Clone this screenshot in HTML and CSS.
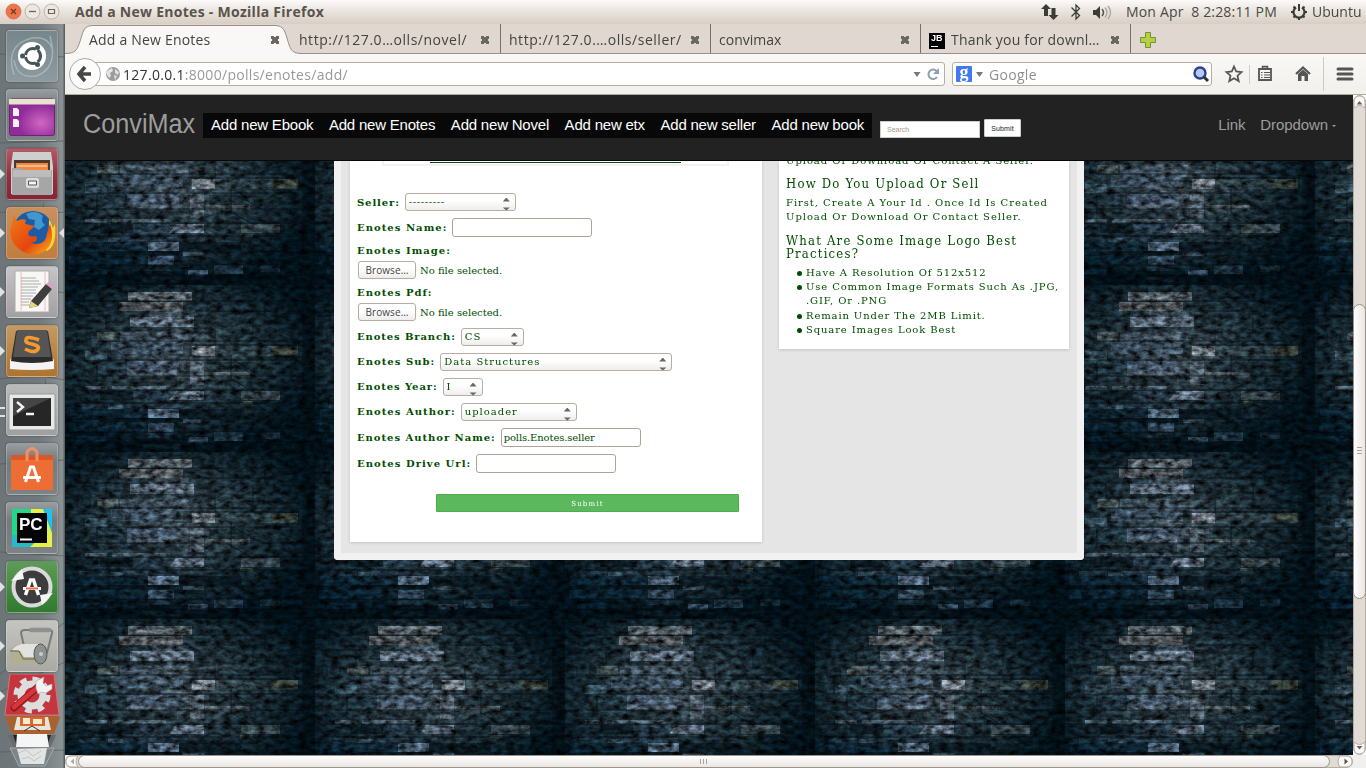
FILE: index.html
```html
<!DOCTYPE html>
<html lang="en">
<head>
<meta charset="utf-8">
<title>Add a New Enotes</title>
<link rel="stylesheet" href="styles.css">
</head>
<body>
<div class="desktop">
  <header class="topbar">
    <svg class="winbtns" width="66" height="24" viewBox="0 0 66 24">
      <circle cx="13.500" cy="11.500" r="7.500" fill="#ee7549" stroke="#d9774f"/><path d="M11 9l5 5M16 9l-5 5" stroke="#6b3a28" stroke-width="1.300"/>
      <circle cx="32.500" cy="11.500" r="7.500" fill="#ece7e1" stroke="#bcb3a8"/><path d="M29 11.500h7" stroke="#6d655b" stroke-width="1.300"/>
      <circle cx="51.500" cy="11.500" r="7.500" fill="#ece7e1" stroke="#bcb3a8"/><path d="M48.500 9.500h6v4h-6z" fill="none" stroke="#6d655b" stroke-width="1.200"/>
    </svg>
    <span class="wintitle">Add a New Enotes - Mozilla Firefox</span>
    <div class="tray">
      <svg width="74" height="24" viewBox="0 0 74 24" fill="#3c3b37">
        <path d="M6 4L1 9h3v7h4V9h3zM13.500 20l5-5h-3V8h-4v7h-3z"/>
        <path d="M31.500 7.500l8 8L36 19V5l3.500 3.500-8 8" fill="none" stroke="#3c3b37" stroke-width="1.300"/>
        <path d="M53 10h3l4-4v13l-4-4h-3z"/>
        <path d="M62 9q3 3.500 0 7" fill="none" stroke="#55534f" stroke-width="1.500"/><path d="M65 7.500q4 5 0 10M68 6q5 6.500 0 13" fill="none" stroke="#aaa59e" stroke-width="1.400"/>
      </svg>
      <span class="clock">Mon Apr&nbsp; 8 2:28:11 PM</span>
      <svg width="18" height="18" viewBox="0 0 18 18" fill="none" stroke="#3c3b37"><path d="M6 4.500a5.500 5.500 0 1 0 6 0" stroke-width="2.200"/><path d="M9 1v7" stroke-width="2"/><path d="M1 9h3M14 9h3M9 14v3M3.500 3.500l2 2M14.500 3.500l-2 2M3.500 14.500l2-2M14.500 14.500l-2-2" stroke-width="2"/></svg>
      <span class="user">Ubuntu</span>
    </div>
  </header>

  <aside class="launcher">
    <svg class="stone" width="65" height="744" viewBox="0 0 65 744" fill="none" stroke="#4c5557"><path d="M0 30l65 3M0 119l65-2M0 188l30 3 35-3M44 179l-2 8 3 6M0 268l40-3 25 4M0 355l34-4 31 5M45 355l4 33M0 440l65-4M0 528l65 4M0 650l65-52M0 668l65-30M0 728l65-2"/></svg>
    <div class="tile t-dash"><svg viewBox="0 0 52 52"><path d="M8 45Q-2 15 26 8q18-2 21 14M44 6q9 32-14 40-19 3-22-16" stroke="#bac7ca" fill="none" stroke-width="1.500" opacity=".6"/><circle cx="26" cy="26" r="14" fill="#fff"/><circle cx="27" cy="26" r="7.500" fill="none" stroke="#465456" stroke-width="3" stroke-dasharray="13.700 2" stroke-dashoffset="7"/><g fill="#465456"><circle cx="16.500" cy="26" r="2.500"/><circle cx="31.500" cy="17.500" r="2.500"/><circle cx="31.500" cy="34.500" r="2.500"/></g></svg></div>
    <div class="tile t-glass"><svg viewBox="0 0 52 52"><defs><radialGradient id="pu" cx=".7" cy=".65"><stop stop-color="#d267c2"/><stop offset="1" stop-color="#8f2c99"/></radialGradient></defs><rect x="3.500" y="10" width="45" height="36.500" rx="2" fill="url(#pu)" stroke="#6e2277"/><rect x="3" y="10" width="46" height="5.500" fill="#e7e3cd"/><path d="M7 19h4l2 2v6H7zM7 30h4l2 2v6H7z" fill="#f6f0f6"/></svg></div>
    <div class="tile t-red run"><svg viewBox="0 0 52 52"><path d="M7 4h38l2 14v28H5V18z" fill="#cfcfcf"/><path d="M8 12h36v13H8z" fill="#4d3930"/><path d="M10 15h32v10H10z" fill="#f0893f"/><path d="M11 18h30" stroke="#fff0c8"/><path d="M6 20h9l3 2h28v25H6z" fill="#a6a6a6"/><path d="M7 22h38v7H7z" fill="#bcbcbc"/><rect x="20" y="30" width="13" height="10" rx="2" fill="#ddd"/><path d="M22.500 33h8v4h-8z" fill="#f6f6f6" stroke="#555"/></svg></div>
    <div class="tile t-orange run focus"><svg viewBox="0 0 52 52"><defs><linearGradient id="fx" x2="1" y2="1"><stop stop-color="#f17b17"/><stop offset=".6" stop-color="#e6450e"/><stop offset="1" stop-color="#f5b91d"/></linearGradient></defs><circle cx="27" cy="24" r="20" fill="#1d5ca4"/><path d="M20 7q10-5 17 2-3 5 2 9l-6 5-5-3 1-7-6-1z" fill="#4298ce"/><path d="M43 12q3 4 4 9l2-4q2 22-8 27l-6-4q9-10 8-28z" fill="#f9d437"/><path d="M8 8l3 6q5-3 9-1l-1 4 10 2-6 5q-3 7 7 5 3 5-5 7 15 4 16-10l3-9q6 18-5 27-13 8-26-2Q2 33 5 20z" fill="url(#fx)"/></svg></div>
    <div class="tile t-grey run"><svg viewBox="0 0 52 52"><path d="M9 5h34v41H9z" fill="#f7f7f5" stroke="#aaa"/><path d="M15 6v39M39 6v39" stroke="#e8a5a0" stroke-width=".7"/><path d="M15 12h15M15 15h18M15 18h20M15 21h17M15 24h15M15 27h15M15 30h12M15 33h10M15 36h8M15 39h18" stroke="#999" stroke-width=".8"/><path d="M25 35L40 18l6 5-14 17-9 2z" fill="#3e3e3e"/><path d="M25 35l7 5-9 2z" fill="#e7d67c"/><path d="M40 18q3-4 7 1 0 2-1 4z" fill="#d9a0ca"/></svg></div>
    <div class="tile t-brown run"><svg viewBox="0 0 52 52"><path d="M7 31l-3 4v9q22 2 44 0v-9l-3-4z" fill="#f4f4f4"/><path d="M10 6h32l5 30q-21 4-42 0z" fill="#2b2b2b"/><path d="M11 5h30l4 27H7z" fill="#555"/><path d="M33 15q-13-5-13 0-1 3 6 4 8 2 6 5-3 5-13 0" fill="none" stroke="#f7982f" stroke-width="3.600"/></svg></div>
    <div class="tile t-grey2 run2"><svg viewBox="0 0 52 52"><rect x="3" y="10" width="46" height="36" rx="1" fill="#e8e8e8" stroke="#999"/><path d="M7 14h38v28H7z" fill="#262626"/><path d="M7 14h38L7 32z" fill="#454545"/><path d="M11 18l6 5-6 5M20 30h8" fill="none" stroke="#f4f4f4" stroke-width="2.400"/></svg></div>
    <div class="tile t-glass"><svg viewBox="0 0 52 52"><path d="M5 12h42v35H5z" fill="#ee6d35"/><path d="M5 12h42v5H5z" fill="#d65a28"/><path d="M21 18v-9q5-7 10 0v9" fill="none" stroke="#f38e65" stroke-width="3"/><path d="M19.500 39l5-15h3l5 15M17 34.500h18" fill="none" stroke="#fff" stroke-width="3"/></svg></div>
    <div class="tile t-glass"><svg viewBox="0 0 52 52"><path d="M6 7h40v38H6z" fill="#21d789"/><path d="M29 7h17v30z" fill="#1cb8f0"/><path d="M25 7h12l9 24v14H24z" fill="#e5f146"/><path d="M39 7h7v20z" fill="#1cc4ef"/><path d="M6 45l18 0 10-9-28-3z" fill="#27b9c9"/><path d="M11 11h30v30H11z" fill="#050505"/><text class="pc" x="13" y="28">PC</text><path d="M14 37.500h12" stroke="#fff" stroke-width="2"/></svg></div>
    <div class="tile t-green run"><svg viewBox="0 0 52 52"><circle cx="26" cy="26" r="18.500" fill="#3c3c3c" stroke="#dadada" stroke-width="4"/><path d="M5 20l11-12 2 10zM47 32L36 44l-2-10z" fill="#f5f5f5"/><path d="M19.500 34l5-15h3l5 15" fill="none" stroke="#fff" stroke-width="3.500"/><path d="M17 27.500h18" stroke="#fff" stroke-width="3"/><path d="M20 27.500h12" stroke="#ee7433" stroke-width="2"/></svg></div>
    <div class="tile t-paper run"><svg viewBox="0 0 52 52"><path d="M18 26L15 13q0-3 4-3h24q4 0 3 3l-5 20" fill="none" stroke="#777c7b" stroke-width="2"/><path d="M25 10h18" stroke="#8d9291" stroke-width="4.500" stroke-linecap="round"/><path d="M4 29q8-6 14-5h18v20H8q-4 0-4-6z" fill="#b0af94"/><path d="M16 24h19v13H18l-4-6-8-1q4-5 10-6z" fill="#e2e3df"/><ellipse cx="34.500" cy="34" rx="6.500" ry="10" fill="#8c9191" stroke="#555"/><circle cx="35" cy="34" r="2" fill="#ccc"/><path d="M4 31h9l4 8h12" stroke="#66684f" fill="none"/></svg></div>
    <div class="stack">
      <svg width="56" height="94" viewBox="0 0 56 94"><path d="M6 0h44l5 41H1z" fill="#c4363e" stroke="#de7076"/><circle cx="28" cy="21" r="11" fill="none" stroke="#ddd" stroke-width="7"/><circle cx="28" cy="21" r="15.500" fill="none" stroke="#ddd" stroke-width="6" stroke-dasharray="6.500 5.670"/><path d="M10 34l25-22" stroke="#9b1a20" stroke-width="7" stroke-linecap="round"/><path d="M10 33l25-21" stroke="#d8353c" stroke-width="4.500" stroke-linecap="round"/><path d="M32 14l0-7 8-4-1 6 3 3 6-2 0 5-6 4-5-1-3 2z" fill="#f2f2f2" stroke="#aaa" stroke-width=".6"/><path d="M4 42h49l3 1-6 17H8L1 43z" fill="#a9622f"/><path d="M13 43h31l3 13H10z" fill="#e8e4dd"/><path d="M16 43h25v9H16z" fill="#db672d"/><path d="M19 44h7v6h-7zM29 45h9v5h-9z" fill="#f5ead2"/><path d="M20 57l8-5 8 5" fill="none" stroke="#333"/><path d="M4 61h48l-6 13H10z" fill="#666c6e"/><path d="M9 61h38l-4 11H13z" fill="#222"/><path d="M13 60h30l2 13H12z" fill="#f5f5f5"/><path d="M6 74h44l-9 18H15z" fill="#7d8588" stroke="#a5abac"/><path d="M13 75l30-1-3 16H17z" fill="#e2e3e3"/><path d="M14 79l8-3 7 6 8-5M18 85l7-2 5 4 7-5" stroke="#c2c5c5" fill="none"/></svg>
    </div>
  </aside>

  <main class="browser">
    <div class="tabs">
      <svg class="tabshape" width="245" height="31" viewBox="0 0 245 31"><path d="M0 29.500c10 0 12-3 15-12S18 1.500 28 1.500H210c9 0 10 6 13 16s5 12 15 12H245V31H0z" fill="#f9f8f6"/><path d="M0 29.500c10 0 12-3 15-12S18 1.500 28 1.500H210c9 0 10 6 13 16s5 12 15 12H245" fill="none" stroke="#96918a"/></svg>
      <div class="tab"><span class="w1">Add a New Enotes</span><i class="x"></i></div>
      <div class="tab line"><span class="w2">http://127.0…olls/novel/</span><i class="x"></i></div>
      <div class="tab line"><span class="w2">http://127.0.…olls/seller/</span><i class="x"></i></div>
      <div class="tab line"><span>convimax</span><i class="x"></i></div>
      <div class="tab line"><span class="jb">JB</span><span class="w1">Thank you for downl…</span><i class="x"></i></div>
      <svg class="plus" width="18" height="18" viewBox="0 0 18 18"><path d="M6.500 1.500h5v5h5v5h-5v5h-5v-5h-5v-5h5z" fill="#b7cf46" stroke="#739234"/></svg>
    </div>
    <div class="toolbar">
      <svg class="back" width="34" height="34" viewBox="0 0 34 34"><circle cx="17" cy="17" r="15.500" fill="#fcfcfb" stroke="#aaa9a7"/><path d="M17 10l-6 7 6 7M11 17h12" fill="none" stroke="#474747" stroke-width="3.500"/></svg>
      <div class="url">
        <svg width="16" height="16" viewBox="0 0 16 16"><circle cx="8" cy="8" r="7" fill="#9c9c9c"/><path d="M3 4l4-2 1 3-3 2 1 3-2 2-3-5zM10 3l4 3-1 3-3-2zM9 9l3 1-2 4z" fill="#e3e3e3"/></svg>
        <span class="addr"><b>127.0.0.1</b>:8000/polls/enotes/add/</span>
        <svg width="30" height="16" viewBox="0 0 30 16"><path d="M2.500 6h7L6 11z" fill="#777"/><path d="M25.500 5A4.700 4.700 0 1 0 26 11" fill="none" stroke="#8fa0ad" stroke-width="2"/><path d="M28 2v6h-6z" fill="#8fa0ad"/></svg>
      </div>
      <div class="search">
        <span class="g">g</span>
        <svg width="8" height="6" viewBox="0 0 8 6"><path d="M0 1h7L3.500 6z" fill="#777"/></svg>
        <span class="ph">Google</span>
        <svg width="18" height="18" viewBox="0 0 18 18"><circle cx="8" cy="8" r="5.500" fill="#b9c8ee" stroke="#2a418f" stroke-width="2.400"/><path d="M12 12l4 4" stroke="#333" stroke-width="3"/></svg>
      </div>
      <svg class="icons" width="144" height="40" viewBox="0 0 144 40" fill="none" stroke="#555">
        <path d="M18 12.500l2.200 5 5.300.6-4 3.600 1.200 5.400L18 24.300l-4.700 2.800 1.200-5.400-4-3.600 5.300-.6z" stroke-width="1.800"/>
        <path d="M33.500 11v19" stroke="#d0ccc7"/>
        <path d="M43 15h12v11H43z" stroke-width="1.800"/><path d="M46.500 12.500h5v2h-5z" stroke-width="1.500"/><path d="M45 18.500h1.500M48 18.500h6M45 21h1.500M48 21h6M45 23.500h1.500M48 23.500h6" stroke-width="1"/>
        <path d="M80 20l7-6.500 7 6.500" stroke-width="2.200"/><path d="M82 20l5-4.500 5 4.500v7h-3.500v-5h-3v5H82z" fill="#555" stroke="none"/>
        <path d="M107.500 3v34" stroke="#cdc8c2"/>
        <path d="M122 15h14M122 20h14M122 25h14" stroke-width="3" stroke-linecap="round"/>
      </svg>
    </div>

    <div class="viewrow">
      <div class="page">
        <svg class="wall" width="1288" height="660" viewBox="0 0 1288 660">
          <defs>
            <radialGradient id="glowA" cx=".44" cy=".42" r=".58"><stop stop-color="#425059"/><stop offset=".45" stop-color="#22343c"/><stop offset="1" stop-color="#02131c"/></radialGradient>
            <filter id="grain" x="0" y="0" width="1" height="1" color-interpolation-filters="sRGB"><feTurbulence type="fractalNoise" baseFrequency=".12 .2" numOctaves="5" seed="5"/><feColorMatrix values="1.200 0 0 0 -.15  1.200 0 0 0 -.15  1.200 0 0 0 -.15  0 0 0 0 1"/></filter>
            <pattern id="stones" width="250" height="167" patternUnits="userSpaceOnUse" y="23">
              <path fill="url(#glowA)" d="M0 0h250v167H0z"/>
              <g opacity=".56">
              <path fill="#858b8e" d="M63 7h64v9H63z"/><path fill="#74706f" d="M54 17h64v9H54z"/><path fill="#606567" d="M140 87h45v5h-45z"/>
              <path fill="#7c8a9e" d="M65 32h64v10H65z"/><path fill="#8490a8" d="M111 106h28v9h-35z"/><path fill="#4a5a68" d="M84 26h40v6H84zM55 47h68v10H55z"/>
              <path fill="#172329" d="M129 30h22v18h-22zM42 42h60v4H42zM104 61h22v10h-22zM65 92h47v9H65z"/>
              <path fill="#5c6662" d="M32 47h21v9H32z"/><path fill="#42566a" d="M46 57h72v12H46z"/><path fill="#9aa0a8" d="M127 61h23v10h-23z"/>
              <path fill="#34464c" d="M150 61h82v10h-82z"/><path fill="#17282e" d="M144 77h70v10h-70z"/><path fill="#4a565b" d="M176 106h39v9h-39z"/><path fill="#50533f" d="M207 61h26v9h-26zM175 116h13v3h-13z"/>
              <path fill="#416070" d="M20 66h22v9H20zM43 120h15v4H43z"/><path fill="#1d3542" d="M33 76h29v12H33zM14 119h28v5H14z"/>
              <path fill="#4c5f78" d="M62 76h52v11H62z"/><path fill="#64707d" d="M125 76h14v24h-14zM62 87h50v4H62z"/>
              <path fill="#5b6e7b" d="M20 101h22v4H20zM47 101h54v4H47z"/><path fill="#4e6473" d="M118 134h21v4h-21z"/><path fill="#24394c" d="M69 106h34v9H69zM58 119h56v4H58z"/>
              <path fill="#010d15" d="M35 106h33v9H35zM114 124h62v9h-62zM35 133h82v4H35zM70 153h50v5H70z"/>
              <path fill="#0a2638" d="M5 124h38v10H5zM45 124h37v9H45zM4 138h76v9H4zM12 151h30v6H12z"/>
              <path fill="#7189a5" d="M83 124h31v9H83z"/><path fill="#48617c" d="M83 138h26v9H83zM123 152h20v6h-20z"/><path fill="#2c465a" d="M149 147h29v9h-29z"/><path fill="#1b303d" d="M82 148h22v5H82zM195 147h20v7h-20zM78 159h38v5H78z"/>
              </g>
              <path d="M0 16h250M0 31h60M130 26h80M32 56h190M116 60h120M33 75h200M20 91h230M0 105h250M12 118h230M0 134h250M0 147h240M0 157h250M41 32v14M14 8v20M32 76v20M150 48v12M166 70v26M188 32v16M188 118l25 14M165 93l20 12M170 76l28 16M12 48v9M25 48v9M200 18v12" fill="none" stroke="#000b12" stroke-opacity=".7"/>
              <path d="M0 157h250v10H0zM237 0h13v167h-13z" fill="#010c13" opacity=".55"/>
            </pattern>
          </defs>
          <rect width="1288" height="660" fill="url(#stones)"/>
          <rect class="texture" width="1288" height="660" filter="url(#grain)"/>
        </svg>
        <nav class="navbar">
          <span class="brand">ConviMax</span>
          <div class="links"><a>Add new Ebook</a><a>Add new Enotes</a><a>Add new Novel</a><a>Add new etx</a><a>Add new seller</a><a>Add new book</a></div>
          <span class="q">Search</span><span class="go">Submit</span>
          <div class="right"><a>Link</a><a>Dropdown <i class="caret"></i></a></div>
        </nav>
        <section class="panel">
          <div class="card form">
            <div class="prev"><span></span></div>
            <div class="row"><label class="snug">Seller:</label><span class="sel s1">---------<i></i></span></div>
            <div class="row"><label>Enotes Name:</label><input type="text"></div>
            <div class="row r20"><label>Enotes Image:</label></div>
            <div class="row r21"><span class="browse">Browse…</span><span class="nofile">No file selected.</span></div>
            <div class="row r21 mid"><label>Enotes Pdf:</label></div>
            <div class="row r22"><span class="browse">Browse…</span><span class="nofile">No file selected.</span></div>
            <div class="row"><label class="snug">Enotes Branch:</label><span class="sel s2">CS<i></i></span></div>
            <div class="row"><label>Enotes Sub:</label><span class="sel s3">Data Structures<i></i></span></div>
            <div class="row"><label class="snug">Enotes Year:</label><span class="sel s4">I<i></i></span></div>
            <div class="row"><label>Enotes Author:</label><span class="sel s5">uploader<i></i></span></div>
            <div class="row r26"><label class="long">Enotes Author Name:</label><input type="text" value="polls.Enotes.seller"></div>
            <div class="row r26"><label>Enotes Drive Url:</label><input type="text"></div>
            <div class="submit">Submit</div>
          </div>
          <div class="card help">
            <p class="cut">Upload Or Download Or Contact A Seller.</p>
            <h4>How Do You Upload Or Sell</h4>
            <p>First, Create A Your Id . Once Id Is Created<br>Upload Or Download Or Contact Seller.</p>
            <h4>What Are Some Image Logo Best<br>Practices?</h4>
            <ul><li>Have A Resolution Of 512x512</li><li>Use Common Image Formats Such As .JPG,<br>.GIF, Or .PNG</li><li>Remain Under The 2MB Limit.</li><li>Square Images Look Best</li></ul>
          </div>
        </section>
      </div>
      <div class="vbar">
        <svg width="13" height="660" viewBox="0 0 13 660"><defs><linearGradient id="vb"><stop stop-color="#fff"/><stop offset="1" stop-color="#e9e5e1"/></linearGradient></defs><rect x=".5" y=".5" width="12" height="659" rx="6" fill="#e1dbd5" stroke="#b5aca2"/><path d="M1 13V7q0-6 5.500-6T12 7v6q-5.500-5-11 0zM1 647v6q0 6 5.500 6t5.500-6v-6q-5.500 5-11 0z" fill="#faf9f8" stroke="#b5aca2"/><path d="M3.500 9.500L6.500 6l3 3.500zM3.500 651l3 3.500 3-3.500z" fill="#666"/><rect x=".5" y="209.500" width="12" height="294" rx="6" fill="url(#vb)" stroke="#9b938a"/><path d="M4 352.500h5M4 355.500h5M4 358.500h5" stroke="#aaa39a"/></svg>
      </div>
    </div>
    <div class="hbar">
      <svg width="1301" height="13" viewBox="0 0 1301 13"><defs><linearGradient id="hb" x2="0" y2="1"><stop stop-color="#fff"/><stop offset="1" stop-color="#e9e5e1"/></linearGradient></defs><rect x=".5" y=".5" width="1287" height="12" rx="6" fill="#e1dbd5" stroke="#b5aca2"/><path d="M13 1H7Q1 1 1 6.500T7 12h6q-4-5.500 0-11zM1275 1h6q6 0 6 5.500T1281 12h-6q-4-5.500 0-11z" fill="#faf9f8" stroke="#b5aca2"/><path d="M9 3.500L5.500 6.500l3.500 3z" fill="#aaa"/><path d="M1279.500 3.500l3.500 3-3.500 3z" fill="#555"/><rect x="13.500" y=".5" width="1251" height="12" rx="6" fill="url(#hb)" stroke="#9b938a"/><path d="M635.500 4v5M638.500 4v5M641.500 4v5" stroke="#aaa39a"/></svg>
    </div>
  </main>
</div>
</body>
</html>
```
FILE: styles.css
```css
* { box-sizing: border-box; }
body { margin: 0; width: 1366px; height: 768px; overflow: hidden; }
svg { display: block; flex: none; }
.desktop { display: grid; grid-template: 24px 744px / 65px 1301px; font-family: "Open Sans", sans-serif; }

.topbar { grid-column: 1 / 3; display: flex; align-items: center; background: linear-gradient(#fcfbfa, #efebe7 30%, #d8cec4); color: #4b4843; white-space: nowrap; }
.wintitle { margin: -2px 0 0 9px; font-weight: 700; font-size: 14px; color: #5a534b; width: 300px; letter-spacing: .28px; }
.tray { margin-left: auto; display: flex; align-items: center; width: 326px; font-size: 14px; }
.clock { margin: -2px 0 0 12px; width: 164px; letter-spacing: .17px; }
.user { margin: -2px 0 0 4px; }

.launcher { position: relative; padding: 6px 0 0 6px; display: flex; flex-direction: column; gap: 7px; background: linear-gradient(90deg, #6d7578, #71797c 60%, #8b9294 96%, #4f5557); overflow: hidden; }
.stone { position: absolute; left: 0; top: 0; opacity: .6; }
.tile { position: relative; flex: none; width: 52px; height: 52px; border-radius: 4px; border: 1px solid rgba(255,255,255,.22); box-shadow: 0 0 2px rgba(0,0,0,.45); }
.tile svg { width: 52px; height: 52px; margin: -1px; }
.t-dash { background: linear-gradient(#77868b, #8d9ba0); }
.t-glass { background: linear-gradient(#979c9e, #747b7d 35%, #7d8284); }
.t-red { background: linear-gradient(#b05c66, #8f3442 50%, #812634); }
.t-orange { background: linear-gradient(#c9905e, #c27c3e); }
.t-grey { background: linear-gradient(#c6c4c6, #a19fa2); }
.t-grey2 { background: linear-gradient(#b9bbbb, #9ea1a1); }
.t-brown { background: linear-gradient(#c39a63, #ad7430); }
.t-green { background: linear-gradient(#5f9b58, #2f7a30); }
.t-paper { background: linear-gradient(#c4c4c0, #a9aaa3); }
.run::before { content: ""; position: absolute; left: -7px; top: 20px; border: 5px solid transparent; border-left-color: #dfe1e2; border-right: 0; }
.focus::after { content: ""; position: absolute; left: 52px; top: 20px; border: 5px solid transparent; border-right-color: #dfe1e2; border-left: 0; }
.run2::before { content: ""; position: absolute; left: -7px; top: 22px; width: 5px; height: 6px; border-top: 2px solid #dfe1e2; border-bottom: 2px solid #dfe1e2; }
.pc { font: 700 17px "Liberation Sans", sans-serif; fill: #fff; }
.stack { position: relative; margin: -5px 0 0 -2px; }
.stack::before { content: ""; position: absolute; left: -4px; top: 17px; border: 5px solid transparent; border-left-color: #dfe1e2; border-right: 0; }

.browser { display: flex; flex-direction: column; }
.tabs { position: relative; height: 30px; display: flex; align-items: center; padding-left: 16px; background: #dfd7d0; border-bottom: 1px solid #96918a; font-size: 14px; color: #45433f; white-space: nowrap; }
.tabshape { position: absolute; left: 0; top: 0; }
.tab { position: relative; width: 210px; height: 29px; padding: 1px 11px 0 8px; display: flex; align-items: center; }
.tab.line { border-right: 1px solid #77716a; }
.w1 { letter-spacing: .2px; }
.w2 { letter-spacing: .53px; }
.x { margin: 2px 0 0 auto; width: 8px; height: 8px; background: linear-gradient(45deg, transparent 36%, #6c6862 37% 63%, transparent 64%), linear-gradient(-45deg, transparent 36%, #6c6862 37% 63%, transparent 64%); }
.tab:not(.line) .x { margin-right: 1px; }
.jb { width: 16px; height: 16px; color: #fff; font: 700 9px/9px "Liberation Sans", sans-serif; padding: 1px 0 0 2px; margin: 3px 6px 0 0; background: linear-gradient(#fff, #fff) 2px 13px / 7px 1px no-repeat #000; }
.plus { margin: 3px 0 0 8px; }
.toolbar { height: 41px; display: flex; align-items: center; background: linear-gradient(#f9f8f6, #f2f0ed); border-bottom: 1px solid #b3aa9e; }
.back { margin-left: 3px; z-index: 1; }
.url { margin-left: -16px; width: 859px; height: 24px; border: 1px solid #b6ad9f; border-radius: 0 3px 3px 0; background: #fff; display: flex; align-items: center; padding: 0 3px 0 18px; }
.addr { margin-left: 2px; font-size: 14px; color: #999; flex: 1; letter-spacing: .3px; }
.addr b { font-weight: 400; color: #333; }
.search { margin-left: 7px; width: 260px; height: 24px; border: 1px solid #b6ad9f; border-radius: 3px; background: #fff; display: flex; align-items: center; padding: 0 1px 0 3px; }
.g { width: 16px; height: 16px; background: #4179f3; color: #fff; font: 700 18px/12px "Liberation Serif", serif; text-align: center; border-radius: 1px; margin-right: 4px; }
.ph { flex: 1; margin-left: 5px; font-size: 14px; color: #8f8f8f; letter-spacing: .3px; }
.icons { margin-left: 4px; }

.viewrow { display: flex; height: 660px; }
.page { position: relative; width: 1288px; height: 660px; overflow: hidden; background: #021019; }
.wall { position: absolute; left: 0; top: 0; }
.texture { mix-blend-mode: overlay; }
.navbar { position: relative; height: 66px; background: #222; border-bottom: 1px solid #080808; display: flex; padding-left: 18px; font-family: "Liberation Sans", sans-serif; white-space: nowrap; }
.brand { font-size: 27px; line-height: 58px; width: 120px; color: #9d9d9d; transform: scaleX(.935); transform-origin: 0 0; }
.links { margin-top: 18px; height: 25px; width: 669px; background: #080808; display: flex; padding: 0 8px; gap: 15.600px; color: #fff; font-size: 15px; line-height: 24px; letter-spacing: -.21px; }
.q { margin: 26px 0 0 8px; width: 100px; height: 17px; background: #fff; border: 1px solid #ccc; font-size: 7px; line-height: 16px; padding-left: 6px; color: #a7988e; }
.go { margin: 24px 0 0 4px; width: 37px; height: 18px; background: #fff; border: 1px solid #ccc; border-radius: 1px; font-size: 7px; line-height: 17px; text-align: center; color: #222; letter-spacing: .15px; }
.right { margin-left: auto; padding-right: 17px; display: flex; gap: 15px; color: #9d9d9d; font-size: 15px; line-height: 60px; letter-spacing: -.1px; }
.caret { display: inline-block; border: 2px solid transparent; border-top-color: #9d9d9d; border-bottom: 0; vertical-align: middle; }

.panel { position: relative; margin-left: 269px; width: 750px; height: 399px; border: 7px solid #f1f1f1; border-top: 0; border-radius: 0 0 4px 4px; background: #e5e5e5; padding: 0 8px 0 9px; display: flex; gap: 17px; align-items: flex-start; font: 10px "DejaVu Serif", serif; color: #004d00; white-space: nowrap; }
.card { background: #fff; box-shadow: 0 1px 3px rgba(0,0,0,.15); }
.form { width: 412px; height: 381px; padding-left: 7px; }
.prev { margin: 0 0 24px 25px; width: 347px; height: 5px; border: 2px solid #f2f2f2; border-top: 0; padding-left: 46px; }
.prev span { display: block; width: 251px; height: 2px; border-bottom: 1px solid #004d00; }
.row { height: 25px; display: flex; align-items: center; }
.r20 { height: 20px; }
.r21, .r22 { height: 21px; align-items: flex-start; padding-top: 1px; }
.r22 { height: 22px; }
.mid { align-items: center; padding-top: 2px; }
.r26 { height: 26px; }
label { font-weight: 700; letter-spacing: 1.04px; margin-right: 5px; }
.snug { letter-spacing: .9px; }
.long { letter-spacing: .97px; }
.sel { position: relative; height: 18px; border: 1px solid #b7ada3; border-radius: 3px; background: linear-gradient(#fff 40%, #efedeb); line-height: 16px; padding-left: 3px; letter-spacing: 1px; }
.sel i { position: absolute; right: 5px; top: 4px; width: 7px; height: 13px; background: #666; clip-path: polygon(0 4px, 50% 0, 100% 4px, 0 4px, 0 10px, 100% 10px, 50% 13px, 0 10px); }
.s1 { width: 111px; margin-bottom: 2px; letter-spacing: .6px; } .s2 { width: 63px; } .s3 { width: 232px; } .s4 { width: 40px; } .s5 { width: 116px; }
input { width: 140px; height: 19px; border: 1px solid #b0a295; border-radius: 3px; padding: 0 2px; font: 10px "DejaVu Serif", serif; color: #004d00; background: #fff; letter-spacing: -.12px; }
.browse { margin-left: 1px; width: 58px; height: 18px; border: 1px solid #b7ada3; border-radius: 3px; background: linear-gradient(#fff 40%, #efedeb); font: 10px/16px "Open Sans", sans-serif; text-align: center; color: #444; letter-spacing: .1px; }
.nofile { margin-left: 4px; line-height: 19px; letter-spacing: 0; }
.submit { margin: 18px 0 0 79px; width: 303px; height: 18px; border: 1px solid #4cae4c; border-radius: 1px; background: #5cb85c; color: #fff; text-align: center; font-size: 7px; line-height: 18px; letter-spacing: 1.2px; }
.help { width: 290px; height: 188px; padding-left: 7px; overflow: hidden; }
.help p, .help ul { margin: 0; line-height: 14.200px; letter-spacing: .95px; }
.help .cut { margin-top: -7px; }
.help h4 { margin: 9px 0 6px; font: 13px/13px "DejaVu Serif Condensed", "DejaVu Serif", serif; font-stretch: condensed; letter-spacing: 1.2px; }
.help ul { padding-left: 20px; list-style: none; line-height: 14.400px; }
.help li { position: relative; letter-spacing: .88px; }
.help li::before { content: ""; position: absolute; left: -9px; top: 5px; width: 5px; height: 5px; border-radius: 50%; background: #004d00; }
.hbar { height: 13px; background: #f2f0ee; }
```
